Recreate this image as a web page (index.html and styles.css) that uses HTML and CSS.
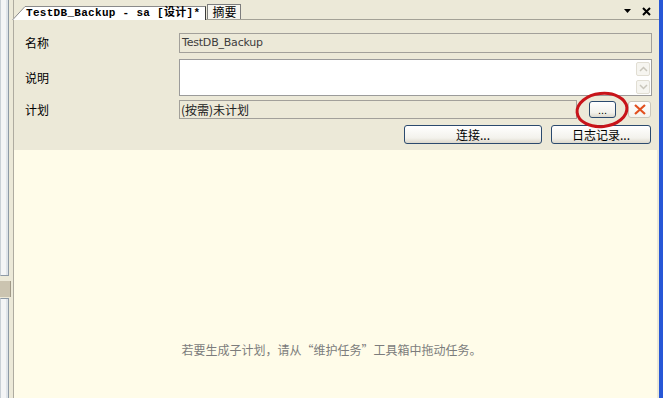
FILE: index.html
```html
<!DOCTYPE html>
<html>
<head>
<meta charset="utf-8">
<link rel="stylesheet" href="styles.css">
</head>
<body>
<div class="app">
  <div class="side">
    <div class="side-panel top"></div>
    <div class="side-tab"></div>
    <div class="side-panel bottom"></div>
  </div>
  <div class="doc">
    <div class="tabbar">
      <div class="tab active">
        <svg class="tab-slant" width="13" height="14" viewBox="0 0 13 14"><polygon points="0,14 13,0.5 13,14" fill="#fff"/><line x1="0.5" y1="14" x2="13" y2="0.5" stroke="#8a8a8a" stroke-width="1"/></svg>
        <div class="tab-body">TestDB_Backup - sa [设计]*</div>
      </div>
      <div class="tab plain">摘要</div>
      <div class="tab-tools">
        <svg width="8" height="5" viewBox="0 0 8 5"><polygon points="0,0 7,0 3.5,4" fill="#000"/></svg>
        <svg width="9" height="9" viewBox="0 0 9 9"><path d="M1 1 L8 8 M8 1 L1 8" stroke="#000" stroke-width="2"/></svg>
      </div>
    </div>
    <div class="form">
      <div class="row r-name">
        <div class="label">名称</div>
        <div class="field disabled">TestDB_Backup</div>
      </div>
      <div class="row r-desc">
        <div class="label">说明</div>
        <div class="field memo">
          <div class="scroll">
            <div class="sbtn"><svg width="9" height="6" viewBox="0 0 9 6"><path d="M1 5 L4.5 1.5 L8 5" fill="none" stroke="#c9c6bb" stroke-width="1.5"/></svg></div>
            <div class="sbtn"><svg width="9" height="6" viewBox="0 0 9 6"><path d="M1 1 L4.5 4.5 L8 1" fill="none" stroke="#c9c6bb" stroke-width="1.5"/></svg></div>
          </div>
        </div>
      </div>
      <div class="row r-plan">
        <div class="label">计划</div>
        <div class="field disabled plan">(按需)未计划</div>
        <div class="btn dots">...</div>
        <div class="btn xbtn"><svg width="14" height="11" viewBox="0 0 14 11"><path d="M2 1 L12 10 M12 1 L2 10" stroke="#e2501f" stroke-width="2.2"/></svg></div>
        <svg class="mark" width="56" height="40" viewBox="0 0 56 40"><ellipse cx="28" cy="20" rx="25" ry="16.5" fill="none" stroke="#c8141a" stroke-width="3" transform="rotate(-6 28 20)"/></svg>
      </div>
      <div class="row r-btns">
        <div class="btn connect">连接...</div>
        <div class="btn log">日志记录...</div>
      </div>
    </div>
    <div class="canvas">
      <p class="hint">若要生成子计划，请从“维护任务”工具箱中拖动任务。</p>
    </div>
  </div>
  <div class="edge"></div>
</div>
</body>
</html>
```

FILE: styles.css
```css
html, body {
  margin: 0;
  padding: 0;
}
body {
  width: 663px;
  height: 398px;
  overflow: hidden;
  background: #ece9d8;
  font-family: "Noto Sans CJK SC", sans-serif;
  font-size: 12px;
  color: #000;
}
.app {
  display: flex;
  height: 398px;
}
.side {
  width: 13px;
  flex: none;
  display: flex;
  flex-direction: column;
}
.side-panel {
  width: 7px;
  background: #f4f5f6;
  border-left: 1px solid #c9d0d6;
  border-right: 1px solid #8e9aa6;
  box-shadow: inset -2px 0 0 #dfe4e9;
}
.side-panel.top {
  height: 275px;
  border-bottom: 1px solid #8e9aa6;
}
.side-tab {
  width: 10px;
  height: 16px;
  margin-top: 5px;
  background: #cbc4b0;
  border-right: 1px solid #a19a88;
}
.side-panel.bottom {
  flex: 1;
  margin-top: 1px;
  border-top: 1px solid #8e9aa6;
}
.doc {
  flex: 1;
  min-width: 0;
  display: flex;
  flex-direction: column;
  border-left: 1px solid #aeaba0;
}
.edge {
  width: 4px;
  flex: none;
  background: #2757d6;
}
.tabbar {
  height: 19px;
  border-bottom: 1px solid #a3a196;
  display: flex;
  align-items: flex-end;
  background: #ece9d8;
}
.tab.active {
  display: flex;
  align-items: stretch;
  height: 14px;
  margin-left: -2px;
  margin-bottom: -1px;
  position: relative;
  z-index: 1;
}
.tab-slant {
  display: block;
  flex: none;
}
.tab-body {
  background: #fff;
  border-top: 1px solid #8a8a8a;
  border-right: 1px solid #3c3c3c;
  padding: 0 5px 0 1px;
  font-family: "Liberation Mono", "Noto Sans CJK SC", monospace;
  font-weight: bold;
  font-size: 11px;
  letter-spacing: 0.3px;
  line-height: 13px;
  white-space: nowrap;
}
.tab.plain {
  height: 14px;
  margin-left: 1px;
  padding: 0 4px;
  border: 1px solid #7d7d7d;
  border-bottom: none;
  background: #f7f6f0;
  font-size: 12px;
  line-height: 14px;
}
.tab-tools {
  margin-left: auto;
  align-self: center;
  display: flex;
  align-items: center;
  gap: 10px;
  padding-right: 8px;
  padding-top: 3px;
}
.tab-tools svg {
  display: block;
}
.form {
  padding: 13px 7px 6px 11px;
  display: flex;
  flex-direction: column;
}
.row {
  display: flex;
  align-items: center;
}
.label {
  width: 154px;
  flex: none;
  line-height: 14px;
}
.field {
  flex: 1;
  box-sizing: border-box;
  border: 1px solid #a2a09a;
}
.field.disabled {
  background: #ece9d8;
  color: #3c3c3c;
  font-family: "DejaVu Sans", "Noto Sans CJK SC", sans-serif;
  font-size: 11px;
  line-height: 17px;
  padding-left: 2px;
  letter-spacing: -0.2px;
}
.r-name .field {
  height: 20px;
}
.r-desc {
  margin-top: 6px;
}
.field.memo {
  height: 37px;
  background: #fff;
  border-color: #9b9b9b;
  display: flex;
}
.scroll {
  margin-left: auto;
  width: 14px;
  padding: 2px 1px 0 0;
  display: flex;
  flex-direction: column;
  gap: 4px;
}
.sbtn {
  height: 12px;
  border: 1px solid #e1ded3;
  border-radius: 2px;
  background: #f6f5f0;
  display: flex;
  align-items: center;
  justify-content: center;
}
.r-plan {
  margin-top: 4px;
  position: relative;
}
.field.plan {
  flex: none;
  width: 398px;
  height: 19px;
  font-family: "Noto Sans CJK SC", sans-serif;
  font-size: 12px;
  line-height: 17px;
  padding-left: 1px;
  color: #222;
  letter-spacing: 0;
}
.btn {
  box-sizing: border-box;
  border: 1px solid #2b4a6e;
  border-radius: 3px;
  background: linear-gradient(#ffffff, #f3f2ec 70%, #dcd8cc);
  display: flex;
  align-items: center;
  justify-content: center;
  font-size: 12px;
  line-height: 14px;
  color: #000;
}
.btn.dots {
  width: 27px;
  height: 17px;
  margin-left: 12px;
  font-family: "Liberation Sans", sans-serif;
  font-size: 11px;
  align-items: flex-end;
  padding-bottom: 2px;
  line-height: 10px;
}
.btn.xbtn {
  width: 23px;
  height: 17px;
  margin-left: 12px;
  border-color: #c9c6bb;
  background: linear-gradient(#ffffff, #f4f3ee);
}
.btn.xbtn svg {
  display: block;
}
.mark {
  position: absolute;
  left: 549px;
  top: -10px;
}
.r-btns {
  margin-top: 6px;
  justify-content: flex-end;
  gap: 9px;
  padding-right: 1px;
}
.btn.connect {
  width: 138px;
  height: 19px;
}
.btn.log {
  width: 100px;
  height: 19px;
}
.canvas {
  flex: 1;
  margin-right: 2px;
  background: #fffce9;
}
.hint {
  margin: 0;
  padding: 193px 8px 0 0;
  text-align: center;
  color: #7c7c7c;
  font-size: 12px;
  line-height: 14px;
}
```
